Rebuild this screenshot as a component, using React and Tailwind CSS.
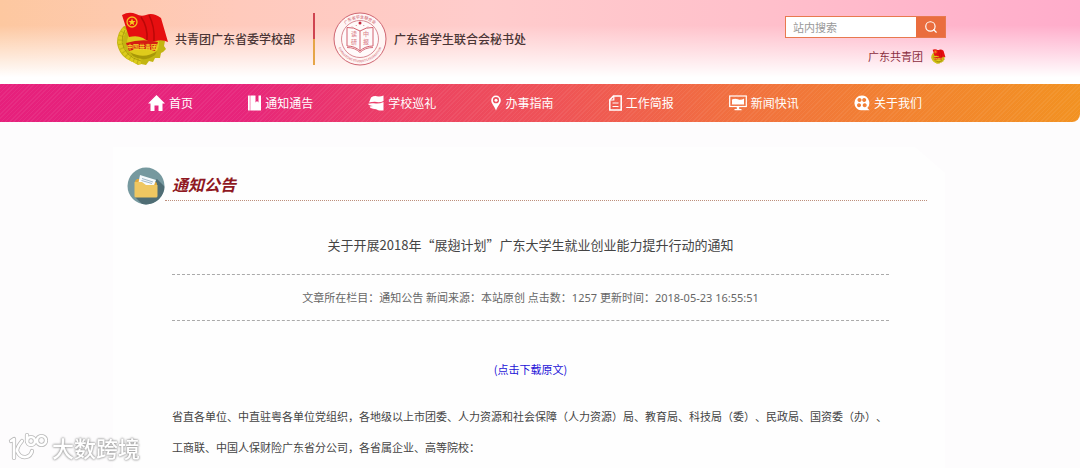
import React from "react";
import { Search } from "lucide-react";

const HomeIcon = () => (
  <svg viewBox="0 0 17 16" className="w-[17px] h-4" fill="currentColor">
    <path d="M8.500 0 L17 8.500 H14.500 V16 H10.500 V10.500 H6.500 V16 H2.500 V8.500 H0 Z" />
  </svg>
);

const BookIcon = () => (
  <svg viewBox="0 0 13 16" className="w-[13px] h-4" fill="currentColor">
    <path d="M0 1 Q0 0.500 0.500 0.500 H1.800 V15.500 H0 Z" />
    <path d="M2.300 0.500 H7.500 V7.500 L9 6 L10.500 7.500 V0.500 H13 V15.500 H2.300 Z" />
  </svg>
);

const FlagIcon = () => (
  <svg viewBox="0 0 16 16" className="w-4 h-4" fill="currentColor">
    <path d="M3 2.500 Q6 0.500 9 1.300 T15.500 0.500 V6 Q12 7.800 9 7 T1 7.600 Z" />
    <path d="M0 8.800 Q3 7.900 6 8.300 Q11 9.300 15.500 7 V15.500 H11 Q8 14 5 13.800 Q2 13.300 1.500 11.500 L5 11 Q1 10.800 0 8.800 Z" />
  </svg>
);

const PinIcon = () => (
  <svg viewBox="0 0 10 16" className="w-[10px] h-4">
    <path
      fill="currentColor"
      fillRule="evenodd"
      d="M5 0.500 A4.800 4.800 0 0 1 9.800 5.300 C9.800 8.500 6.500 11.500 5 15.500 C3.500 11.500 0.200 8.500 0.200 5.300 A4.800 4.800 0 0 1 5 0.500 Z M5 2.100 A3.100 3.100 0 1 0 5 8.300 A3.100 3.100 0 1 0 5 2.100 Z"
    />
    <circle cx="5" cy="5.200" r="1.500" fill="currentColor" />
  </svg>
);

const FileIcon = () => (
  <svg viewBox="0 0 13 16" className="w-[13px] h-4" fill="none" stroke="currentColor">
    <path d="M4.500 1 H12.200 V15 H0.800 V4.800 Z" strokeWidth="1.500" />
    <path d="M4.800 1 V5 H1" strokeWidth="1.200" />
    <path d="M3.500 8 H9.500 M3.500 11.500 H9.500" strokeWidth="1.200" />
  </svg>
);

const MonitorIcon = () => (
  <svg viewBox="0 0 18 16" className="w-[18px] h-4">
    <rect x="0.700" y="1" width="16.600" height="10.500" fill="none" stroke="currentColor" strokeWidth="1.200" />
    <path d="M3 4.500 Q6 3 9 4.300 T15 3.500 V9.400 H3 Z" fill="currentColor" />
    <path d="M7.800 11.500 H10.200 V14 H12.500 V15.300 H5.500 V14 H7.800 Z" fill="currentColor" />
  </svg>
);

const ReelIcon = () => (
  <svg viewBox="0 0 16 16" className="w-4 h-4">
    <path
      fill="currentColor"
      fillRule="evenodd"
      d="M7.800 0.500 A7.500 7.500 0 0 1 13.300 13.100 L15.500 15.300 H7.800 A7.400 7.400 0 0 1 7.800 0.500 Z
        M5.500 3 a2 2 0 1 0 0.010 0 Z M10.200 3 a2 2 0 1 0 0.010 0 Z M5 8.300 a2 2 0 1 0 0.010 0 Z M10.700 8.300 a2 2 0 1 0 0.010 0 Z"
    />
  </svg>
);

const navigationItems = [
  { name: "首页", icon: HomeIcon },
  { name: "通知通告", icon: BookIcon },
  { name: "学校巡礼", icon: FlagIcon },
  { name: "办事指南", icon: PinIcon },
  { name: "工作简报", icon: FileIcon },
  { name: "新闻快讯", icon: MonitorIcon },
  { name: "关于我们", icon: ReelIcon },
];

// Youth League emblem, also used small next to the header link
function LeagueEmblem({ className }) {
  return (
    <svg viewBox="0 0 54 54" className={className} aria-hidden="true">
      <path
        d="M40 20 L46 23 L46 27 L49 29 L48 34 L50 37 L47 40 L45 41 L44 46 L39 46 L37 50 L33 49 L30 53 L25 52 L22 53 L17 50 Q3 45 1 31 Q1 20 8 14 Z"
        fill="#c3b512"
      />
      <path d="M9 17 Q-1 31 11 43 Q17 49 25 50" fill="none" stroke="#dccb1c" strokeWidth="5" strokeDasharray="3 1.200" />
      <path d="M9 18 Q2 31 12 42 Q17 47 25 49" fill="none" stroke="#9c8c08" strokeWidth="0.700" />
      <circle cx="27" cy="31" r="16" fill="#dfcb1b" />
      <path d="M14 40 Q28 48 41 39 L39 43 Q28 51 17 44 Z" fill="#a89808" />
      <path d="M6 3 Q13 -1 20 2 Q25 5 30 3 Q37 0 45 6 L52 30 Q46 27 40 29 Q33 31 27 26 Q21 23 13 25 Z" fill="#e60f10" />
      <path d="M33 3 Q39 15 38 29 M25 5 Q32 15 31 28" fill="none" stroke="#ba0808" strokeWidth="1.500" />
      <circle cx="16" cy="10" r="5" fill="none" stroke="#f7bd20" strokeWidth="1.300" />
      <path d="M16 6.500 L17 9 L19.500 9 L17.500 10.700 L18.300 13.300 L16 11.700 L13.700 13.300 L14.500 10.700 L12.500 9 L15 9 Z" fill="#f7cb20" />
      <path d="M10 31 Q26 26 42 30 L39 39 Q26 34 13 39 Z" fill="#d51d12" />
      <text x="26" y="36.500" textAnchor="middle" fontSize="6" fontWeight="700" fill="#f3d32a">
        中国共青团
      </text>
    </svg>
  );
}

function UnionSeal() {
  return (
    <svg viewBox="0 0 54 54" className="w-[54px] h-[54px] shrink-0" aria-hidden="true">
      <defs>
        <path id="seal-top" d="M6.500 27 A20.500 20.500 0 0 1 47.500 27" />
        <path id="seal-bottom" d="M3.800 27 A23.200 23.200 0 0 0 50.200 27" />
      </defs>
      <circle cx="27" cy="27" r="26" fill="#fff5f4" stroke="#cf6672" strokeWidth="1" />
      <circle cx="27" cy="27" r="18.500" fill="#fffafa" stroke="#d98a93" strokeWidth="1" />
      <text fontSize="4" fill="#d4707b" textAnchor="middle">
        <textPath href="#seal-top" startOffset="50%">广东省学生联合会</textPath>
      </text>
      <text fontSize="3" fill="#d4707b" textAnchor="middle">
        <textPath href="#seal-bottom" startOffset="50%">GUANGDONG STUDENTS FEDERATION</textPath>
      </text>
      <circle cx="27" cy="11" r="1.500" fill="#c3263b" />
      <path d="M19 14.500 l1 1 M23 13 l0.500 1 M31 13 l-0.500 1 M35 14.500 l-1 1" stroke="#d26f7a" strokeWidth="0.800" />
      <g fill="none" stroke="#d26370" strokeWidth="1">
        <path d="M27 19 Q21 15 14 15.500 V34 Q22 34 27 39 Q32 34 40 34 V15.500 Q33 15 27 19 V39" />
        <path d="M14 35.500 Q22 35.500 27 40.500 Q32 35.500 40 35.500" strokeWidth="0.900" />
      </g>
      <g fontSize="6" fontWeight="500" fill="#dc8790" textAnchor="middle">
        <text x="21" y="24">读</text>
        <text x="21" y="32">研</text>
        <text x="33" y="24">中</text>
        <text x="33" y="32">报</text>
      </g>
    </svg>
  );
}

function FolderBadge() {
  return (
    <svg viewBox="0 0 38 38" className="w-[38px] h-[38px] shrink-0" aria-hidden="true">
      <defs>
        <clipPath id="badge-clip">
          <circle cx="19" cy="19" r="18.500" />
        </clipPath>
      </defs>
      <circle cx="19" cy="19" r="18.500" fill="#76999f" />
      <g clipPath="url(#badge-clip)">
        <path d="M30 12 L38 20 V38 H16 L8 30 Z" fill="#4f6d74" />
        <path d="M8 14 L10 12 H17 L19 15 H28 Q30 15 30 17 V28 H8 Z" fill="#dfa93c" />
        <path d="M13 8 L29 13 L26 21 L11 18 Z" fill="#f6fafc" />
        <path d="M15 11.500 L26 15 M14.500 13.500 L25 16.500" stroke="#98afc0" strokeWidth="0.900" />
        <path d="M7.500 15 H15 L19 18 H30.500 V29 Q30.500 30.500 29 30.500 H9 Q7.500 30.500 7.500 29 Z" fill="#efc761" />
      </g>
    </svg>
  );
}

function Watermark() {
  return (
    <div className="fixed left-2 bottom-1.5 flex items-center gap-1 pointer-events-none">
      <svg viewBox="0 0 40 30" className="w-10 h-[30px]" fill="none" strokeLinecap="round" strokeLinejoin="round">
        <g stroke="#b9b9b9" strokeWidth="4.200">
          <path d="M3 9 L6 7 V26 M14 9 Q9 15 9 19 Q12 26 18 25 Q23 24 24 19" />
          <path d="M19 3 V9" />
          <circle cx="23" cy="9" r="4" />
          <circle cx="33.500" cy="8.500" r="4.500" />
        </g>
        <g stroke="#fff" strokeWidth="2.600">
          <path d="M3 9 L6 7 V26 M14 9 Q9 15 9 19 Q12 26 18 25 Q23 24 24 19" />
          <path d="M19 3 V9" />
          <circle cx="23" cy="9" r="4" />
          <circle cx="33.500" cy="8.500" r="4.500" />
        </g>
      </svg>
      <span className="text-[22px] leading-6 font-medium text-white [text-shadow:0_0_2px_#999,0_0_2px_#aaa,0_0_3px_#bbb]">
        大数跨境
      </span>
    </div>
  );
}

function Header() {
  return (
    <header className="pr-5 bg-[linear-gradient(to_bottom,transparent_30%,rgba(255,255,255,0.5)_62%,white_92%),linear-gradient(to_right,#fdc8a0,#ffcabc_22%,#ffcccc_45%,#ffc0cb_70%,#ffaccb)]">
      <div className="max-w-[832px] h-[84px] mx-auto pl-0.5 flex justify-between">
        <div className="flex items-center self-start pt-3 text-[12px] leading-5 font-medium text-[#4a3535]">
          <LeagueEmblem className="w-[54px] h-[54px] shrink-0" />
          <span className="ml-[5px] w-[138px]">共青团广东省委学校部</span>
          <div className="w-0.5 h-[52px] bg-[linear-gradient(to_bottom,#cf4450_50%,#e6a548_50%)]" />
          <div className="ml-[18px]">
            <UnionSeal />
          </div>
          <span className="ml-[7px]">广东省学生联合会秘书处</span>
        </div>

        <div className="w-[161px] pt-4 text-[11px]">
          <form className="flex h-[22px] border border-[#e8794f] bg-white" onSubmit={(e) => e.preventDefault()}>
            <input
              type="text"
              aria-label="站内搜索"
              placeholder="站内搜索"
              className="flex-1 min-w-0 px-[7px] outline-none placeholder:text-[#999]"
            />
            <button type="submit" aria-label="搜索" className="w-[29px] bg-[#ea6d3e] text-white flex items-center justify-center">
              <Search className="w-[14px] h-[14px]" strokeWidth={2} />
            </button>
          </form>
          <a href="#" className="mt-2 flex items-center justify-end gap-2 leading-5 text-[#8c2f3f]">
            广东共青团
            <LeagueEmblem className="w-[15px] h-[15px]" />
          </a>
        </div>
      </div>
    </header>
  );
}

function Navigation() {
  return (
    <nav className="pr-5 rounded-br-lg bg-[repeating-linear-gradient(135deg,rgba(255,255,255,0.06)_0_1px,transparent_1px_3px),linear-gradient(to_right,#e6207c_0%,#e7247b_22%,#ec4263_38%,#ef5456_52%,#f1703f_68%,#f2852e_86%,#f29222)]">
      <ul className="max-w-[832px] h-[38px] mx-auto pl-[34px] pr-6 flex items-center justify-between">
        {navigationItems.map((item) => (
          <li key={item.name}>
            <a href="#" className="flex items-center gap-1 text-[12px] leading-5 text-white">
              <item.icon />
              {item.name}
            </a>
          </li>
        ))}
      </ul>
    </nav>
  );
}

export default function App() {
  return (
    <div
      lang="zh-CN"
      className="min-h-screen flex flex-col bg-[#fdfcfd] font-['Noto_Sans_CJK_SC',sans-serif] [text-spacing-trim:space-all]"
    >
      <Header />
      <Navigation />

      {/* Article */}
      <main className="grow flex flex-col pr-[22px] pt-[25px]">
        <div className="grow w-full max-w-[832px] mx-auto pt-5 bg-[#fefefe] [clip-path:polygon(0_0,calc(100%_-_30px)_0,100%_26px,100%_100%,0_100%)]">
          <div className="flex items-start pl-[14px] pr-[18px]">
            <FolderBadge />
            <h2 className="grow h-[34px] pl-[7px] border-b border-dotted border-[#bd8f7c] text-[16px] leading-[34px] font-bold italic text-[#8f1822]">
              通知公告
            </h2>
          </div>

          <article className="pl-[59px] pr-14 text-[11px] text-[#444]">
            <h1 className="mt-[30px] text-[13px] leading-5 text-center">
              关于开展2018年“展翅计划”广东大学生就业创业能力提升行动的通知
            </h1>
            <p className="mt-[19px] border-y border-dashed border-[#aaa] font-['Noto_Sans','Noto_Sans_CJK_SC',sans-serif] leading-[45px] text-center text-[#666]">
              文章所在栏目：通知公告 新闻来源：本站原创 点击数：1257 更新时间：2018-05-23 16:55:51
            </p>
            <p className="mt-[38px] leading-5 text-center">
              <a href="#" className="text-[#1d12d8]">(点击下载原文)</a>
            </p>
            <p className="mt-[22px] leading-[31px]">
              省直各单位、中直驻粤各单位党组织，各地级以上市团委、人力资源和社会保障（人力资源）局、教育局、科技局（委）、民政局、国资委（办）、工商联、中国人保财险广东省分公司，各省属企业、高等院校：
            </p>
          </article>
        </div>
      </main>

      <Watermark />
    </div>
  );
}
